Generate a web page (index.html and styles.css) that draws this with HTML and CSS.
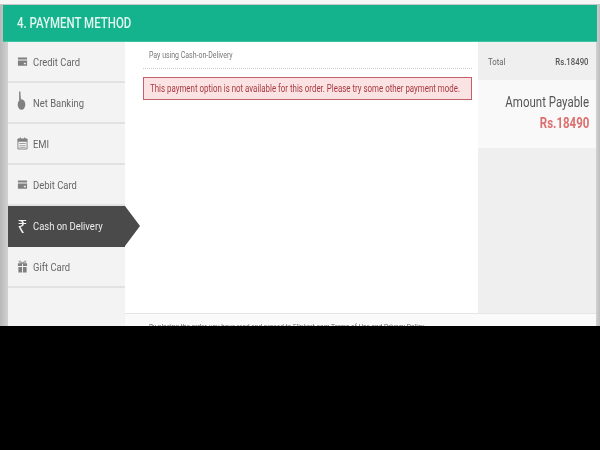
FILE: index.html
```html
<!DOCTYPE html>
<html lang="en">
<head>
<meta charset="utf-8">
<title>Payment Method</title>
<link rel="stylesheet" href="styles.css">
</head>
<body>
<div class="screen">
  <div class="top-gap"></div>
  <div class="card">
    <div class="header"><span class="narrow">4. PAYMENT METHOD</span></div>
    <div class="columns">
      <nav class="side">
        <div class="item">
          <svg class="icon" viewBox="0 0 12 12"><path d="M1 1.500h10v2.200H1zM1 5h10v5.500H1z" fill="#808080"/><rect x="7.500" y="7.500" width="2.200" height="1.500" fill="#eee"/></svg>
          <span class="narrow">Credit Card</span>
        </div>
        <div class="item">
          <svg class="icon icon-tall" viewBox="0 0 11 19"><path d="M2 0.500h1.400l.6 8.500H2z" fill="#8a8a8a"/><ellipse cx="4.500" cy="13.500" rx="3.800" ry="5.200" fill="#808080"/></svg>
          <span class="narrow">Net Banking</span>
        </div>
        <div class="item">
          <svg class="icon" viewBox="0 0 12 14"><path d="M1 2h10v11H1z" fill="none" stroke="#808080"/><path d="M1 2h10v3H1zM3 0.500h1.200v2.500H3zM7.800 0.500H9v2.500H7.800z" fill="#808080"/><path d="M2.500 6.500h7v1h-7zM2.500 8.500h7v1h-7zM2.500 10.500h7v1h-7z" fill="#a0a0a0"/></svg>
          <span class="narrow">EMI</span>
        </div>
        <div class="item">
          <svg class="icon" viewBox="0 0 12 12"><path d="M1 1.500h10v2.200H1zM1 5h10v5.500H1z" fill="#808080"/><rect x="7.500" y="7.500" width="2.200" height="1.500" fill="#eee"/></svg>
          <span class="narrow">Debit Card</span>
        </div>
        <div class="item active">
          <span class="rupee">₹</span>
          <span class="narrow">Cash on Delivery</span>
        </div>
        <div class="item">
          <svg class="icon" viewBox="0 0 12 14"><path d="M1 3.500h4.500v3H1zM6.500 3.500H11v3H6.500zM1.500 7.500h4v6h-4zM6.500 7.500h4v6h-4z" fill="#808080"/><path d="M6 3.500C4 .5 2 .5 2.500 2S5 3.500 6 3.500C8 .5 10 .5 9.500 2S7 3.500 6 3.500z" fill="none" stroke="#808080"/></svg>
          <span class="narrow">Gift Card</span>
        </div>
      </nav>
      <div class="content">
        <div class="content-row">
          <main class="main">
            <div class="pay-title"><span class="narrow">Pay using Cash-on-Delivery</span></div>
            <div class="alert"><span class="narrow alert-text">This payment option is not available for this order. Please try some other payment mode.</span></div>
          </main>
          <aside class="summary">
            <div class="total"><span class="narrow total-label">Total</span><span class="narrow-end total-value">Rs.18490</span></div>
            <div class="payable">
              <div><span class="narrow-end payable-label">Amount Payable</span></div>
              <div><span class="narrow-end payable-value">Rs.18490</span></div>
            </div>
          </aside>
        </div>
        <div class="footer"><span class="narrow">By placing the order, you have read and agreed to Flipkart.com Terms of Use and Privacy Policy</span></div>
      </div>
    </div>
  </div>
</div>
<div class="letterbox"></div>
</body>
</html>
```
FILE: styles.css
```css
* { box-sizing: border-box; }
html, body { margin: 0; padding: 0; background: #000; }
body { width: 600px; height: 450px; overflow: hidden; font-family: Roboto, "Liberation Sans", sans-serif; }
.screen {
  height: 326px;
  overflow: hidden;
  padding-left: 8px;
  padding-right: 4px;
  background: linear-gradient(90deg, #b8b8b8 0, #d2d2d2 8px, #d2d2d2 596px, #bdbdbd 600px);
  filter: blur(0.6px);
}
.narrow { display: inline-block; white-space: nowrap; transform: scaleX(.82); transform-origin: left center; }
.narrow-end { display: inline-block; white-space: nowrap; transform: scaleX(.82); transform-origin: right center; }
.top-gap { height: 5px; margin: 0 -4px 0 -8px; background: #f6f6f6; border-bottom: 1px solid #c8c8c8; }
.card { background: #fff; }
.header {
  height: 37px;
  margin: 0 -1px 0 -5px;
  padding-left: 14px;
  display: flex;
  align-items: center;
  background: #14b38d;
  border-bottom: 1px solid #3fc3a2;
  color: #e2f6f0;
  font-size: 14px;
  font-weight: 500;
}
.columns { display: flex; height: 284px; }
.side { width: 117px; background: #f3f3f3; }
.item {
  height: 41px;
  display: flex;
  align-items: center;
  gap: 4px;
  padding: 0 0 0 9px;
  color: #666;
  font-size: 11.5px;
  border-bottom: 2px solid #e2e2e2;
  position: relative;
}
.icon { width: 11px; height: 13px; flex: none; margin-right: 1px; }
.icon-tall { height: 19px; margin-top: -4px; }
.active { background: #4a4a4a; color: #eee; border-bottom-color: #4a4a4a; }
.active::after {
  content: "";
  position: absolute;
  left: 100%;
  top: 0;
  border-left: 15px solid #4a4a4a;
  border-top: 20.5px solid transparent;
  border-bottom: 20.5px solid transparent;
}
.rupee { width: 11px; margin-right: 1px; font-size: 18px; line-height: 18px; color: #f2f2f2; font-family: "Noto Sans", "DejaVu Sans", sans-serif; text-align: center; }
.content { flex: 1; display: flex; flex-direction: column; }
.content-row { display: flex; flex: none; height: 272px; border-bottom: 1px solid #e6e6e6; }
.main { width: 353px; padding: 8px 6px 0 18px; background: #fff; }
.pay-title {
  height: 19px;
  font-size: 8.5px;
  color: #777;
  padding-left: 6px;
  line-height: 11px;
  border-bottom: 1px dotted #ccc;
}
.alert {
  margin: 8px 0 0 0;
  height: 23px;
  padding-left: 6px;
  display: flex;
  align-items: center;
  background: #fbe3e3;
  border: 1px solid #c25f68;
  color: #a93a42;
  font-size: 10px;
}
.alert-text { transform: scaleX(.79); }
.summary { width: 118px; background: #efefef; }
.total {
  height: 38px;
  display: flex;
  justify-content: space-between;
  align-items: center;
  padding: 0 7px 0 10px;
  font-size: 9.5px;
  color: #666;
}
.total-value { color: #555; font-weight: 500; }
.payable { height: 68px; background: #f9f9f9; padding: 12px 7px 0 0; text-align: right; font-size: 14px; line-height: 21px; }
.payable-label { color: #555; }
.payable-value { font-weight: 700; color: #dd6e6e; }
.footer { flex: none; height: 12px; padding: 8px 0 0 24px; background: #fafafa; font-size: 8px; line-height: 9px; color: #666; }
.letterbox { height: 124px; background: #000; }
```
